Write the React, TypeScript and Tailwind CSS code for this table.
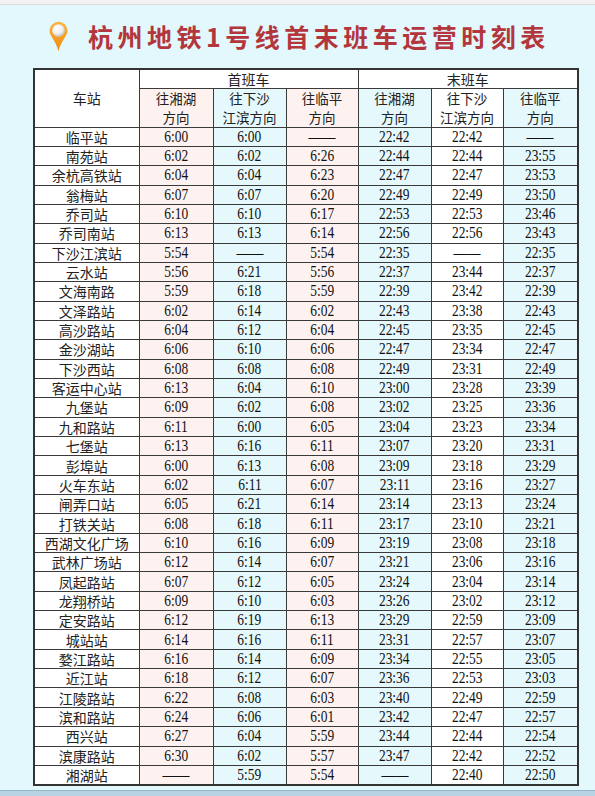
import React from "react";

type Row = [string, string, string, string, string, string, string];

const rows: Row[] = [
  ["临平站", "6:00", "6:00", "——", "22:42", "22:42", "——"],
  ["南苑站", "6:02", "6:02", "6:26", "22:44", "22:44", "23:55"],
  ["余杭高铁站", "6:04", "6:04", "6:23", "22:47", "22:47", "23:53"],
  ["翁梅站", "6:07", "6:07", "6:20", "22:49", "22:49", "23:50"],
  ["乔司站", "6:10", "6:10", "6:17", "22:53", "22:53", "23:46"],
  ["乔司南站", "6:13", "6:13", "6:14", "22:56", "22:56", "23:43"],
  ["下沙江滨站", "5:54", "——", "5:54", "22:35", "——", "22:35"],
  ["云水站", "5:56", "6:21", "5:56", "22:37", "23:44", "22:37"],
  ["文海南路", "5:59", "6:18", "5:59", "22:39", "23:42", "22:39"],
  ["文泽路站", "6:02", "6:14", "6:02", "22:43", "23:38", "22:43"],
  ["高沙路站", "6:04", "6:12", "6:04", "22:45", "23:35", "22:45"],
  ["金沙湖站", "6:06", "6:10", "6:06", "22:47", "23:34", "22:47"],
  ["下沙西站", "6:08", "6:08", "6:08", "22:49", "23:31", "22:49"],
  ["客运中心站", "6:13", "6:04", "6:10", "23:00", "23:28", "23:39"],
  ["九堡站", "6:09", "6:02", "6:08", "23:02", "23:25", "23:36"],
  ["九和路站", "6:11", "6:00", "6:05", "23:04", "23:23", "23:34"],
  ["七堡站", "6:13", "6:16", "6:11", "23:07", "23:20", "23:31"],
  ["彭埠站", "6:00", "6:13", "6:08", "23:09", "23:18", "23:29"],
  ["火车东站", "6:02", "6:11", "6:07", "23:11", "23:16", "23:27"],
  ["闸弄口站", "6:05", "6:21", "6:14", "23:14", "23:13", "23:24"],
  ["打铁关站", "6:08", "6:18", "6:11", "23:17", "23:10", "23:21"],
  ["西湖文化广场", "6:10", "6:16", "6:09", "23:19", "23:08", "23:18"],
  ["武林广场站", "6:12", "6:14", "6:07", "23:21", "23:06", "23:16"],
  ["凤起路站", "6:07", "6:12", "6:05", "23:24", "23:04", "23:14"],
  ["龙翔桥站", "6:09", "6:10", "6:03", "23:26", "23:02", "23:12"],
  ["定安路站", "6:12", "6:19", "6:13", "23:29", "22:59", "23:09"],
  ["城站站", "6:14", "6:16", "6:11", "23:31", "22:57", "23:07"],
  ["婺江路站", "6:16", "6:14", "6:09", "23:34", "22:55", "23:05"],
  ["近江站", "6:18", "6:12", "6:07", "23:36", "22:53", "23:03"],
  ["江陵路站", "6:22", "6:08", "6:03", "23:40", "22:49", "22:59"],
  ["滨和路站", "6:24", "6:06", "6:01", "23:42", "22:47", "22:57"],
  ["西兴站", "6:27", "6:04", "5:59", "23:44", "22:44", "22:54"],
  ["滨康路站", "6:30", "6:02", "5:57", "23:47", "22:42", "22:52"],
  ["湘湖站", "——", "5:59", "5:54", "——", "22:40", "22:50"],
];

// column fills, station column first
const colBg = [
  "bg-white",
  "bg-[#fdf2f0]",
  "bg-[#e5f8fc]",
  "bg-[#fdf2f0]",
  "bg-[#e5f8fc]",
  "bg-white",
  "bg-[#e5f8fc]",
];

const dirs: [string, string][] = [
  ["往湘湖", "方向"],
  ["往下沙", "江滨方向"],
  ["往临平", "方向"],
  ["往湘湖", "方向"],
  ["往下沙", "江滨方向"],
  ["往临平", "方向"],
];

const cjk = "font-['Noto_Sans_CJK_SC',sans-serif]";
const num = "font-['Liberation_Serif','Noto_Sans_CJK_SC',serif]";
const cell = "border border-[#3a3a3a] p-0 text-center align-middle leading-[16px]";

function PinIcon() {
  return (
    <svg width="19" height="31" viewBox="0 0 20 32">
      <defs>
        <radialGradient id="ball" cx="0.4" cy="0.35" r="0.7">
          <stop offset="0" stopColor="#ffffff" />
          <stop offset="0.6" stopColor="#eeeeee" />
          <stop offset="1" stopColor="#bdbdbd" />
        </radialGradient>
        <linearGradient id="pin" x1="0" y1="0" x2="0" y2="1">
          <stop offset="0" stopColor="#fbb53a" />
          <stop offset="1" stopColor="#ee8a12" />
        </linearGradient>
      </defs>
      <path d="M10 0.5 A9.5 9.5 0 0 1 19.5 10 C19.5 15 13 20 10 31.5 C7 20 0.5 15 0.5 10 A9.5 9.5 0 0 1 10 0.5 Z" fill="url(#pin)" />
      <circle cx="10" cy="9.6" r="6.6" fill="url(#ball)" />
    </svg>
  );
}

function Num({ v }: { v: string }) {
  return <span className="inline-block scale-x-[0.84] text-[16px] leading-[16px] text-[#111]">{v}</span>;
}

export default function App() {
  return (
    <div className="min-h-[796px] w-[595px] bg-[#e3f8fc] flex flex-col overflow-hidden">
      <div className="h-[5px] bg-[#f3f3f3] border-b border-[#dcdcdc]" />

      <div className="h-[63px] flex items-center pl-[49px] gap-[20px]">
        <PinIcon />
        <h1 className={`${cjk} text-[25px] font-bold tracking-[4.5px] text-[#b3363d] leading-none`}>
          杭州地铁1号线首末班车运营时刻表
        </h1>
      </div>

      <div className="pl-[33px]">
        <table className="table-fixed border-collapse border-2 border-[#333] w-[544px] leading-[16px]">
          <colgroup>
            <col className="w-[105px]" />
            <col className="w-[74px]" />
            <col className="w-[73px]" />
            <col className="w-[72px]" />
            <col className="w-[73px]" />
            <col className="w-[72px]" />
            <col className="w-[75px]" />
          </colgroup>
          <thead className={`${cjk} text-[14px] text-[#222]`}>
            <tr className="h-[19px]">
              <th rowSpan={2} className={`${cell} bg-white font-normal`}>
                车站
              </th>
              <th colSpan={3} className={`${cell} bg-white font-normal`}>
                首班车
              </th>
              <th colSpan={3} className={`${cell} bg-white font-normal`}>
                末班车
              </th>
            </tr>
            <tr className="h-[38px]">
              {dirs.map(([a, b], i) => (
                <th key={i} className={`${cell} ${colBg[i + 1]} font-normal text-[13.5px]`}>
                  <div className="leading-[19px]">{a}</div>
                  <div className="leading-[19px]">{b}</div>
                </th>
              ))}
            </tr>
          </thead>
          <tbody>
            {rows.map((r) => (
              <tr key={r[0]} className="h-[19.35px]">
                {r.map((v, i) =>
                  i === 0 ? (
                    <td key={i} className={`${cell} ${colBg[0]} ${cjk} text-[14px] text-[#222]`}>
                      {v}
                    </td>
                  ) : (
                    <td key={i} className={`${cell} ${colBg[i]} ${num} text-[15px]`}>
                      <Num v={v} />
                    </td>
                  )
                )}
              </tr>
            ))}
          </tbody>
        </table>
      </div>

      <div className="mt-auto h-[6px] bg-[#b8d4e4] border-t border-[#94b6ca]" />
    </div>
  );
}
